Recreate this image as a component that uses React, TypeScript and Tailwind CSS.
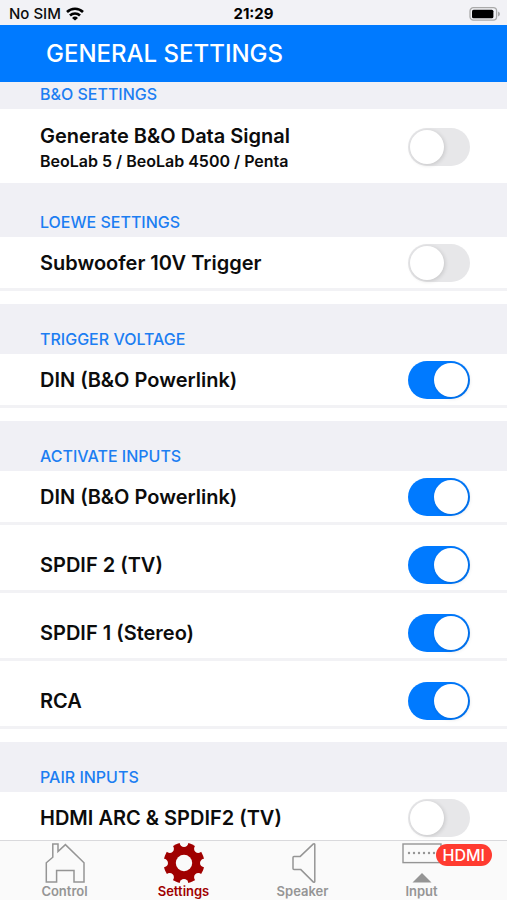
import { useState } from 'react'

type Item = {
  id: string
  label: string
  hint?: string
  on: boolean
}

type Group = {
  title: string
  headClass: string
  items: Item[]
}

const groups: Group[] = [
  {
    title: 'B&O SETTINGS',
    headClass: 'pt-0.5',
    items: [
      {
        id: 'bo-data',
        label: 'Generate B&O Data Signal',
        hint: 'BeoLab 5 / BeoLab 4500 / Penta',
        on: false,
      },
    ],
  },
  {
    title: 'LOEWE SETTINGS',
    headClass: 'pt-[29px]',
    items: [{ id: 'sub-trigger', label: 'Subwoofer 10V Trigger', on: false }],
  },
  {
    title: 'TRIGGER VOLTAGE',
    headClass: 'pt-[25px]',
    items: [{ id: 'trigger-din', label: 'DIN (B&O Powerlink)', on: true }],
  },
  {
    title: 'ACTIVATE INPUTS',
    headClass: 'pt-[25px]',
    items: [
      { id: 'input-din', label: 'DIN (B&O Powerlink)', on: true },
      { id: 'input-spdif2', label: 'SPDIF 2 (TV)', on: true },
      { id: 'input-spdif1', label: 'SPDIF 1 (Stereo)', on: true },
      { id: 'input-rca', label: 'RCA', on: true },
    ],
  },
  {
    title: 'PAIR INPUTS',
    headClass: 'pt-[25px]',
    items: [{ id: 'pair-hdmi', label: 'HDMI ARC & SPDIF2 (TV)', on: false }],
  },
]

function Row({ item }: { item: Item }) {
  const [on, setOn] = useState(item.on)

  return (
    <div
      className={
        item.hint
          ? 'flex h-[74px] items-center justify-between pt-0.5 pr-[37px] pl-10'
          : 'flex h-[54px] items-center justify-between border-b-3 border-[#f2f2f5] pr-[37px] pl-10'
      }
    >
      <label htmlFor={item.id} className={`text-xl font-semibold ${item.hint ? 'pt-1 leading-[25px]' : 'leading-6'}`}>
        {item.label}
        {item.hint && <span className="block text-base leading-[25px] font-semibold">{item.hint}</span>}
      </label>
      <input
        id={item.id}
        type="checkbox"
        role="switch"
        checked={on}
        onChange={(e) => setOn(e.target.checked)}
        className="h-[38px] w-[62px] shrink-0 appearance-none rounded-full bg-[#e7e7e9] p-0.5 before:block before:size-[34px] before:rounded-full before:bg-white before:shadow-[1px_1px_4px_rgba(0,0,0,0.15)] checked:bg-[#007aff] checked:before:ml-6"
      />
    </div>
  )
}

function HomeIcon() {
  return (
    <svg viewBox="0 0 40 40" className="size-10" fill="none" stroke="currentColor" strokeWidth="1.5">
      <path d="M7.8 1h5.2v7.5L20.4 1.6 39 19.8V39H29V27.4H11.6V39H1.3V19.8l6.5-5.6z" />
    </svg>
  )
}

function GearIcon() {
  return (
    <svg viewBox="0 0 40 40" className="size-10">
      <mask id="gear-cut">
        <circle cx="20" cy="20" r="20.4" fill="#fff" />
        <circle cx="20" cy="20" r="8.2" fill="#000" />
        {[0, 45, 90, 135, 180, 225, 270, 315].map((a) => (
          <ellipse key={a} cx="20" cy="-.4" rx="4.3" ry="4.4" fill="#000" transform={`rotate(${a} 20 20)`} />
        ))}
      </mask>
      <rect width="40" height="40" fill="currentColor" mask="url(#gear-cut)" />
    </svg>
  )
}

function SpeakerIcon() {
  return (
    <svg viewBox="0 0 40 40" className="size-10" fill="none" stroke="currentColor" strokeWidth="1.5" strokeLinejoin="round">
      <path d="M11 13.6h6L30.4.9q1.4-.5 1.4.9v36.4q0 1.4-1.4.9L17.6 26.4H11q-1 0-1-1V14.6q0-1 1-1z" />
    </svg>
  )
}

function InputIcon() {
  return (
    <svg viewBox="0 0 40 40" className="size-10" fill="currentColor">
      <rect x="1" y="1" width="38" height="18.6" fill="none" stroke="currentColor" strokeWidth="1.4" />
      {[7, 12, 17, 22, 27, 32].map((x) => (
        <circle key={x} cx={x} cy="10" r="1.2" />
      ))}
      <path d="M20 30l9.5 9.5h-19z" />
    </svg>
  )
}

const tabs = [
  { label: 'Control', icon: HomeIcon },
  { label: 'Settings', icon: GearIcon, active: true },
  { label: 'Speaker', icon: SpeakerIcon },
  { label: 'Input', icon: InputIcon, badge: 'HDMI' },
]

export default function App() {
  return (
    <div className="flex h-screen flex-col bg-white font-['Inter',sans-serif] text-[#0c0c0c]">
      <div className="grid h-[25px] shrink-0 grid-cols-3 items-center bg-[#f2f2f6] px-1.5 pt-0.5">
        <div className="flex items-center gap-[5px] pl-[3px] text-[15px] leading-5 font-medium">
          <span>No SIM</span>
          <svg viewBox="0 0 18 14" className="h-[14px] w-[18px]" fill="none" stroke="#000" strokeWidth="2.6">
            <path d="M1 5a11.5 11.5 0 0 1 16 0M4 8.5a7.2 7.2 0 0 1 10 0" />
            <path d="M9 13.6L6 10.9a4.3 4.3 0 0 1 6 0z" fill="#000" stroke="none" />
          </svg>
        </div>
        <span className="text-center text-[15px] leading-5 font-bold text-black">21:29</span>
        <svg viewBox="0 0 32 14" className="h-[14px] w-8 justify-self-end">
          <rect x="1" y=".7" width="26.6" height="12.4" rx="3.4" fill="#f2f2f6" stroke="#aaa" strokeWidth="1.3" />
          <rect x="3" y="2.7" width="21.4" height="8.6" rx="1.6" />
          <path d="M29 4.6q2 .8 2 2.4t-2 2.4z" fill="#aaa" />
        </svg>
      </div>

      <header className="flex h-[57px] shrink-0 items-center bg-[#007aff] pl-[46px]">
        <h1 className="text-2xl font-medium text-white">GENERAL SETTINGS</h1>
      </header>

      <main className="min-h-0 flex-1 overflow-y-auto [scrollbar-width:none]">
        {groups.map((group) => (
          <section key={group.title}>
            <h2 className={`bg-[#f0f0f5] pb-[5px] pl-10 text-base leading-5 font-medium text-[#1c7ef2] ${group.headClass}`}>
              {group.title}
            </h2>
            <div className={group.items[0].hint ? '' : 'flex flex-col gap-[14px] pb-[13px]'}>
              {group.items.map((item) => (
                <Row key={item.id} item={item} />
              ))}
            </div>
          </section>
        ))}
      </main>

      <nav className="flex h-[60px] shrink-0 border-t border-[#d9d9dc] bg-[#fafafa] pt-0.5 pr-[26px] pl-[5px]">
        {tabs.map((tab) => (
          <button
            key={tab.label}
            type="button"
            aria-current={tab.active ? 'page' : undefined}
            className={`flex flex-1 flex-col items-center text-[13px] leading-4 font-semibold ${tab.active ? 'text-[#a00000]' : 'text-[#959595]'}`}
          >
            <span className="relative">
              <tab.icon />
              {tab.badge && (
                <span className="absolute top-px left-[34px] rounded-full bg-[#ff3b30] px-[7px] text-base leading-[22px] font-medium text-white">
                  {tab.badge}
                </span>
              )}
            </span>
            {tab.label}
          </button>
        ))}
      </nav>
    </div>
  )
}
